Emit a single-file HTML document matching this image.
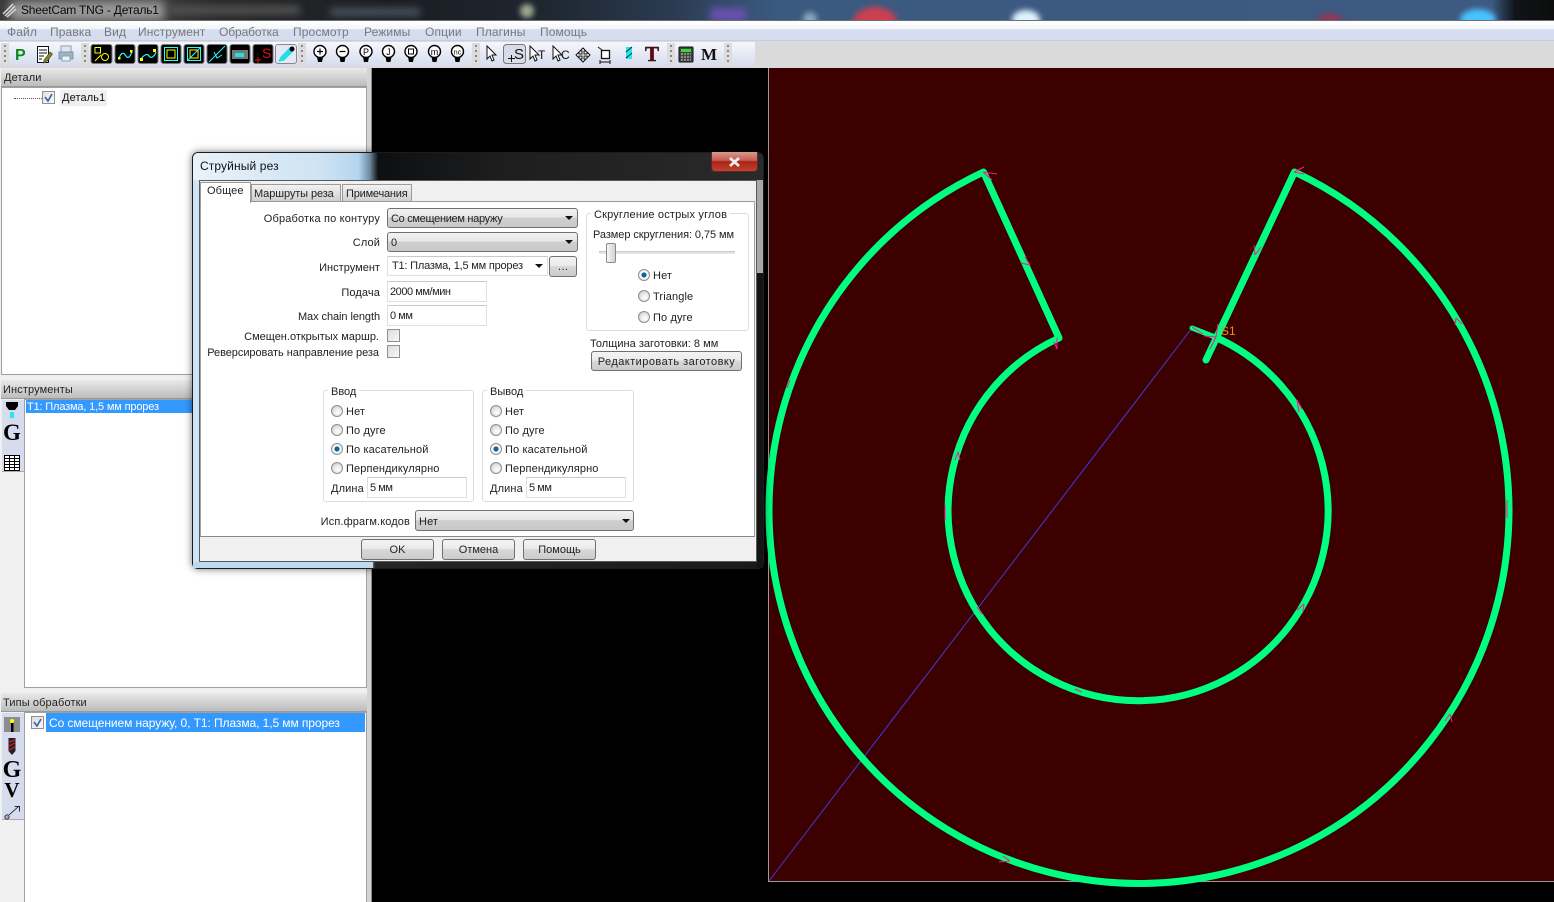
<!DOCTYPE html>
<html lang="ru"><head><meta charset="utf-8"><title>SheetCam TNG - Деталь1</title>
<style>
html,body{margin:0;padding:0;width:1554px;height:902px;overflow:hidden;background:#000}
body{position:relative;font:11px "Liberation Sans","Noto Sans CJK SC",sans-serif;color:#222}
div,span{position:absolute;box-sizing:border-box}
.t{white-space:nowrap;line-height:14px;letter-spacing:.12px}
.m{color:#77797f;font-size:12px;top:25px}
.hd{background:linear-gradient(#e9e9e9,#bcbcbc);border-bottom:1px solid #999}
.cb{background:linear-gradient(#f3f3f3 0,#e6e6e6 45%,#cfcfcf 50%,#c9c9c9 100%);border:1px solid #707070;border-radius:3px}
.btn{background:linear-gradient(#f4f4f4 0,#ebebeb 45%,#d8d8d8 50%,#cbcbcb 100%);border:1px solid #707070;border-radius:3px;text-align:center;line-height:20px;color:#222}
.in{background:#fff;border:1px solid #dbdfe6;border-top-color:#c5c9d0;line-height:20px;padding-left:2px;white-space:nowrap;letter-spacing:-.45px}
.gb{border:1px solid #d5dfe5;border-radius:3px}
.lb{background:#fff;padding:0 3px;white-space:nowrap;line-height:14px}
.ck{width:13px;height:13px;border:1px solid #8e8f8f;background:linear-gradient(135deg,#dcdcdc,#f8f8f8)}
.r{width:12px;height:12px;border-radius:50%;border:1px solid #8e8f8f;background:radial-gradient(circle at 60% 65%,#fff 0,#e6e6e6 50%,#bbb 100%)}
.r.on{background:radial-gradient(circle,#0d6fa8 0,#0a5f94 30%,#fff 42%,#ddd 100%)}
.arr{width:0;height:0;border-left:4px solid transparent;border-right:4px solid transparent;border-top:4px solid #111}
.grip{width:8px;top:43px;height:23px;background:#dcdcdc}
.grip:after{content:"";position:absolute;left:3px;top:2px;width:2px;height:18px;background:repeating-linear-gradient(#888 0 2px,transparent 2px 5px)}
</style></head><body>

<!-- title bar -->
<div style="left:0;top:0;width:1554px;height:20px;overflow:hidden;background:linear-gradient(90deg,#3a3a3a 0,#444 8%,#2a2a2a 14%,#1a1d22 25%,#1e2630 35%,#2a3a50 43%,#3b5a80 50%,#3d5a82 96%,#101418 97.5%,#0c0c0c 100%)">
 <div style="left:10px;top:1px;width:155px;height:20px;background:#9a9a9a;filter:blur(5px)"></div>
 <div style="left:853px;top:7px;width:44px;height:30px;border-radius:50%;background:#cc4050;filter:blur(3px)"></div>
 <div style="left:803px;top:12px;width:14px;height:16px;border-radius:50%;background:#8aa8c0;filter:blur(3px)"></div>
 <div style="left:1012px;top:10px;width:28px;height:20px;border-radius:50%;background:#dff2ff;filter:blur(3px)"></div>
 <div style="left:1316px;top:13px;width:28px;height:20px;border-radius:50%;background:#8a3a5a;filter:blur(3px)"></div>
 <div style="left:1460px;top:9px;width:36px;height:22px;border-radius:50%;background:#49c4ff;filter:blur(3px)"></div>
 <div style="left:520px;top:4px;width:14px;height:14px;border-radius:50%;background:#a0a890;filter:blur(3px)"></div>
 <div style="left:710px;top:8px;width:36px;height:14px;background:#6a50b0;filter:blur(4px)"></div>
 <div style="left:170px;top:6px;width:130px;height:8px;background:#555;filter:blur(4px)"></div>
 <div style="left:330px;top:8px;width:90px;height:8px;background:#4a5560;filter:blur(4px)"></div>
 <svg style="position:absolute;left:2px;top:2px" width="16" height="16"><path d="M1 12L11 2M3 14L13 4M5 15L14 7" stroke="#ddd" stroke-width="1.5" fill="none"/></svg>
 <span class="t" style="left:21px;top:3px;font-size:12px;color:#0a0a0a;letter-spacing:-.2px">SheetCam TNG - Деталь1</span>
</div>
<div style="left:0;top:20px;width:1554px;height:1px;background:#6e6e70"></div>

<!-- menu -->
<div style="left:0;top:21px;width:1554px;height:20px;background:linear-gradient(#fff 0,#f3f5fa 40%,#d6ddef 42%,#d6ddef 95%,#b8bbd6 100%)"></div>
<span class="t m" style="left:7px">Файл</span><span class="t m" style="left:50px">Правка</span><span class="t m" style="left:104px">Вид</span><span class="t m" style="left:138px">Инструмент</span><span class="t m" style="left:219px;letter-spacing:-.1px">Обработка</span><span class="t m" style="left:293px">Просмотр</span><span class="t m" style="left:364px">Режимы</span><span class="t m" style="left:425px">Опции</span><span class="t m" style="left:476px">Плагины</span><span class="t m" style="left:540px">Помощь</span>

<!-- toolbar -->
<div style="left:0;top:41px;width:1554px;height:27px;background:#dadada"></div>
<div style="left:0;top:42px;width:755px;height:24px;background:linear-gradient(#f6f7fc,#d6dcee)"></div>
<div class="grip" style="left:1px"></div><div class="grip" style="left:81px"></div><div class="grip" style="left:298px"></div><div class="grip" style="left:472px"></div><div class="grip" style="left:667px"></div><div class="grip" style="left:724px"></div>

<svg style="position:absolute;left:0;top:0" width="760" height="68" font-family="Liberation Sans">
 <text x="15" y="60" font-size="16" font-weight="bold" fill="#0a8a1e">P</text>
 <path d="M37.500 46.500h11v16h-11z" fill="#fff" stroke="#111"/><path d="M39 50h8M39 53h8M39 56h5M39 59h3" stroke="#111"/><path d="M44 60l6-8 2.500 2-6 8-3 1z" fill="#7a8a20" stroke="#333" stroke-width=".6"/>
 <path d="M61 46h10v6h-10z" fill="#dfe6f0" stroke="#8aa0b4"/><path d="M59 52h14v7h-14z" fill="#9fb3c6" stroke="#7d94a8"/><path d="M62 56h8v5h-8z" fill="#eef2f6" stroke="#8aa0b4"/>
 <g stroke="#777" fill="#000"><rect x="91" y="44.500" width="21" height="19" rx="2.500"/><rect x="115" y="44.500" width="20" height="19" rx="2.500"/><rect x="138" y="44.500" width="20" height="19" rx="2.500"/><rect x="161" y="44.500" width="20" height="19" rx="2.500"/><rect x="184" y="44.500" width="20" height="19" rx="2.500"/><rect x="207" y="44.500" width="20" height="19" rx="2.500"/><rect x="230" y="44.500" width="20" height="19" rx="2.500"/><rect x="253" y="44.500" width="20" height="19" rx="2.500"/></g>
 <rect x="275.500" y="44.500" width="21" height="19" rx="2.500" fill="#e4e8f4" stroke="#888"/>
 <g fill="none" stroke="#ff0" stroke-width="1"><rect x="95" y="47.500" width="5.500" height="5.500"/><circle cx="105" cy="57" r="3.500"/><path d="M95 61l6-6"/></g>
 <path d="M119 58c3-7 5-5 7-2s4 1 6-4" fill="none" stroke="#2ff" stroke-width="1.200"/><rect x="118" y="57" width="2.500" height="2.500" fill="#ff0"/><rect x="130" y="50" width="2.500" height="2.500" fill="#ff0"/>
 <path d="M141 59c3-4 6-6 8-3s5 1 7-4" fill="none" stroke="#2ff" stroke-width="1.200"/><rect x="140" y="58" width="3" height="3" fill="#ff0"/><rect x="153" y="49" width="3" height="3" fill="#ff0"/>
 <rect x="164.500" y="47.500" width="13" height="13" fill="none" stroke="#2ff"/><rect x="167" y="50" width="8" height="8" fill="none" stroke="#ff0"/>
 <rect x="187.500" y="47.500" width="13" height="13" fill="none" stroke="#2ff"/><rect x="190" y="50" width="8" height="8" fill="none" stroke="#ff0"/><path d="M188 60l13-13" stroke="#2ff"/>
 <path d="M209 62l16-16M214 52l3 6 5-3" fill="none" stroke="#2ff"/>
 <rect x="232" y="50" width="16" height="9" fill="#777"/><rect x="235" y="53" width="9" height="4" fill="#1de0e8"/>
 <text x="262" y="58" font-size="14" fill="#e01010">S</text><path d="M255 60h6M258 57v6" stroke="#e01010"/>
 <path d="M279 61l2-4 9-9 3 3-9 9z" fill="#1de0e8" stroke="#1de0e8"/><circle cx="292" cy="49" r="2.500" fill="#000"/>
 <g fill="#fff" stroke="#000" stroke-width="1.400"><circle cx="320" cy="51.500" r="6"/><circle cx="342.500" cy="51.500" r="6"/><circle cx="366" cy="51.500" r="6"/><circle cx="388.500" cy="51.500" r="6"/><circle cx="411" cy="51.500" r="6"/><circle cx="434.500" cy="51.500" r="6"/><circle cx="457.500" cy="51.500" r="6"/></g>
 <g fill="#000"><path d="M317 57h6l-1 5h-4z"/><path d="M339.500 57h6l-1 5h-4z"/><path d="M363 57h6l-1 5h-4z"/><path d="M385.500 57h6l-1 5h-4z"/><path d="M408 57h6l-1 5h-4z"/><path d="M431.500 57h6l-1 5h-4z"/><path d="M454.500 57h6l-1 5h-4z"/></g>
 <path d="M317 51.500h6M320 48.500v6M339.500 51.500h6" stroke="#000" stroke-width="1.200"/>
 <g font-size="9" fill="#000" text-anchor="middle"><text x="366" y="55">P</text><text x="388.500" y="55">J</text><text x="434.500" y="55">m</text><text x="457.500" y="54.500" font-size="7">nc</text></g>
 <rect x="408.500" y="49" width="5" height="5" fill="none" stroke="#000"/>
 <rect x="503.500" y="44.500" width="22" height="19" rx="3" fill="#d8dbe8" stroke="#777"/>
 <text x="514" y="59" font-size="15" fill="#111">S</text><path d="M508 58.500h7M511.500 55v7" stroke="#111"/>
 <g fill="#fff" stroke="#111"><path d="M487 46v13l3-3 2 5 2-1-2-5h4z"/><path d="M530 46v13l3-3 2 5 2-1-2-5h4z"/><path d="M553 46v13l3-3 2 5 2-1-2-5h4z"/></g>
 <text x="538" y="59" font-size="12" fill="#111">T</text><text x="561" y="59" font-size="12" fill="#111">C</text>
 <path d="M583 48l3 3h-2v3h3v-2l3 3-3 3v-2h-3v3h2l-3 3-3-3h2v-3h-3v2l-3-3 3-3v2h3v-3h-2z" fill="#fff" stroke="#111"/>
 <rect x="601.500" y="50.500" width="8" height="8" fill="#fff" stroke="#111" stroke-width="1.300"/><path d="M598 47l4 3M600 62h10M600 60v4M610 60v4" stroke="#111" fill="none"/>
 <rect x="626" y="47" width="6" height="12" fill="#1de8f0"/><path d="M626 58l6-5M626 52l6-5" stroke="#222"/>
 <text x="652" y="61" font-size="21" font-weight="bold" font-family="Liberation Serif" text-anchor="middle" fill="#6a0606" stroke="#111" stroke-width=".4">T</text>
 <rect x="679" y="47" width="14" height="15" rx="1" fill="#444" stroke="#111"/><rect x="681" y="49" width="10" height="3" fill="#2ee02e"/><path d="M681 54h10M681 57h10M681 60h10" stroke="#ccc" stroke-dasharray="2 1"/>
 <text x="709" y="60" font-size="17" font-weight="bold" font-family="Liberation Serif" text-anchor="middle" fill="#111">M</text>
</svg>

<!-- left column -->
<div style="left:0;top:68px;width:372px;height:834px;background:#f0f0f0"></div>
<div style="left:367px;top:68px;width:4px;height:834px;background:#d4d4d4"></div>
<div style="left:371px;top:68px;width:1px;height:834px;background:#8c8c8c"></div>
<div class="hd" style="left:1px;top:68px;width:366px;height:19px"></div>
<span class="t" style="left:4px;top:71px">Детали</span>
<div style="left:1px;top:87px;width:366px;height:288px;background:#fff;border:1px solid #a0a0a0"></div>
<div style="left:14px;top:98px;width:28px;border-top:1px dotted #555"></div>
<div class="ck" style="left:42px;top:91px;background:linear-gradient(135deg,#e2e2e2,#fbfbfb)"></div>
<svg style="position:absolute;left:42px;top:91px" width="13" height="13"><path d="M3 6l3 4 4-7" fill="none" stroke="#3f5fa8" stroke-width="1.600"/></svg>
<span style="left:60px;top:90px;width:47px;height:16px;background:#efefef"></span>
<span class="t" style="left:62px;top:91px;color:#111">Деталь1</span>

<div class="hd" style="left:1px;top:380px;width:366px;height:19px"></div>
<span class="t" style="left:3px;top:383px">Инструменты</span>
<div style="left:1px;top:399px;width:24px;height:289px;background:#f0f0f0"></div>
<div style="left:2px;top:400px;width:22px;height:72px;background:#d5dcee;border-bottom:1px solid #aaa"></div>
<div style="left:24px;top:399px;width:343px;height:289px;background:#fff;border:1px solid #a0a0a0"></div>
<div style="left:26px;top:400px;width:340px;height:13px;background:#3399ff"></div>
<span class="t" style="left:27px;top:400px;color:#fff;letter-spacing:-.16px">T1: Плазма, 1,5 мм прорез</span>
<svg style="position:absolute;left:0;top:398px" width="25" height="76"><path d="M6 4h12v4l-3 4h-6l-3-4z" fill="#000"/><rect x="10" y="14" width="4" height="6" fill="#33e0f0"/><text x="12" y="42" text-anchor="middle" font-family="Liberation Serif" font-weight="bold" font-size="23" fill="#000">G</text><path d="M4.500 57.500h15v15h-15zM4.500 60.500h15M4.500 63.500h15M4.500 66.500h15M4.500 69.500h15M9.500 57.500v15M14.500 57.500v15" fill="#fff" stroke="#000"/></svg>

<div class="hd" style="left:1px;top:693px;width:366px;height:19px"></div>
<span class="t" style="left:3px;top:696px">Типы обработки</span>
<div style="left:2px;top:713px;width:22px;height:107px;background:#d5dcee;border-bottom:1px solid #aaa"></div>
<div style="left:24px;top:712px;width:343px;height:190px;background:#fff;border:1px solid #a0a0a0;border-bottom:0"></div>
<div style="left:46px;top:713px;width:319px;height:19px;background:#3399ff"></div>
<div class="ck" style="left:31px;top:716px"></div>
<svg style="position:absolute;left:31px;top:716px" width="13" height="13"><path d="M3 6l3 4 4-7" fill="none" stroke="#3f5fa8" stroke-width="1.600"/></svg>
<span class="t" style="left:49px;top:716px;font-size:12px;color:#fff;letter-spacing:-.08px">Со смещением наружу, 0, T1: Плазма, 1,5 мм прорез</span>
<svg style="position:absolute;left:0;top:712px" width="25" height="112"><rect x="4" y="5" width="16" height="15" fill="#8d8d8d"/><circle cx="12" cy="9" r="2" fill="#ff0"/><rect x="11" y="11" width="2.500" height="9" fill="#000"/><path d="M8.500 26h7v13l-3.500 4-3.500-4z" fill="#222"/><path d="M9 30l6-2M9 34l6-3M9 38l6-3" stroke="#e01030" stroke-width="1.200"/><text x="12" y="65" text-anchor="middle" font-family="Liberation Serif" font-weight="bold" font-size="24" fill="#000">G</text><text x="12" y="85" text-anchor="middle" font-family="Liberation Serif" font-weight="bold" font-size="21" fill="#000">V</text><circle cx="7" cy="105" r="2.200" fill="#aaa" stroke="#000" stroke-width=".7"/><path d="M9 103l10-9M14.500 94.500h5v5" fill="none" stroke="#000" stroke-width=".8"/></svg>

<!-- canvas -->
<div style="left:768px;top:68px;width:786px;height:814px;background:#3c0000;border-left:1px solid #9a9a9a;border-bottom:1px solid #9a9a9a"></div>
<svg style="position:absolute;left:0;top:0" width="1554" height="902" fill="none">
 <path d="M769 881L1192 328" stroke="#3c3cd8" stroke-width="1"/>
 <g stroke="#00ff80" stroke-width="7" stroke-linecap="round" stroke-linejoin="round">
  <path d="M1215 337A190 190 0 1 1 1059 338L983.500 172A370 373 0 1 0 1294.500 172L1206 360"/>
  <path d="M1192 328L1215 337" stroke-width="5"/>
 </g>
 <g stroke="#ff1493" stroke-width="1">
  <path d="M983 172l14 2M983 172l9 8M1294 172l10-5M1294 172l10 2"/>
  <path d="M1255 255l-1-10M1255 255l6-8M1216 337l-6 12M1216 337l2-13M1216 337l-12-1M1192 327l11 7M1030 265l-5-8M1030 265l-9-2M1057 349v-11M1057 349l-3-7"/>
  <path d="M1297 400l2 12M1297 400l5 9M1456 318l6 6M1456 318l-1 7M1304 604l-7 6M1304 604l-1 8M1450 714l-5 7M1450 714l2 8M1010 861l-11 1M1010 861l-7-5M1075 689l7 3M958 452l-3 8M958 452l2 8M790 380l-3 8M1507 500v18"/>
  <path d="M945 505v15M977 607l5 7"/>
 </g>
 <text x="1221" y="335" font-size="12" fill="#e89018" font-family="Liberation Sans">S1</text>
</svg>

<!-- dialog -->
<div style="left:192px;top:152px;width:572px;height:417px;border-radius:6px;border:1px solid #1c1c1c;background:linear-gradient(90deg,#cfe5f6 0,#bcd9f0 30%,#9fc6e6 31%,#262626 32%,#1a1a1a 100%);box-shadow:0 0 8px rgba(0,0,0,.55)"></div>
<div style="left:193px;top:153px;width:570px;height:27px;border-radius:5px 5px 0 0;background:linear-gradient(90deg,#e8f2fa 0,#cfe3f3 22%,#b4d6f0 29%,#6f8ba3 31%,#0d0f12 32.500%,#1e1e1e 55%,#2a2a2a 100%)"></div>
<div style="left:757px;top:180px;width:6px;height:93px;background:#a8a8a8"></div>
<div style="left:757px;top:273px;width:6px;height:295px;background:#141414"></div>
<div style="left:193px;top:562px;width:180px;height:6px;background:#bcd9f0"></div>
<span class="t" style="left:200px;top:159px;font-size:12px;color:#111">Струйный рез</span>
<div style="left:711px;top:152px;width:47px;height:20px;background:linear-gradient(#d89a90 0,#c85a50 45%,#a82418 50%,#c2402f 100%);border:1px solid #5a2a28;border-top:0;border-radius:0 0 4px 4px"></div>
<svg style="position:absolute;left:727px;top:156px" width="16" height="12"><path d="M3 2l9 8M12 2l-9 8" stroke="#eee" stroke-width="2.800"/></svg>

<div style="left:199px;top:180px;width:558px;height:382px;background:#f0f0f0;border:1px solid #5a5a5a"></div>
<div style="left:200px;top:201px;width:555px;height:336px;background:#fff;border:1px solid #a0a0a0;border-bottom:1px solid #888;border-top:1px solid #9a9a9a"></div>
<div style="left:200px;top:182px;width:51px;height:21px;background:#fff;border:1px solid #9a9a9a;border-bottom:0"></div>
<div style="left:251px;top:184px;width:90px;height:18px;background:linear-gradient(#f2f2f2,#cfcfcf);border:1px solid #9a9a9a"></div>
<div style="left:342px;top:184px;width:70px;height:18px;background:linear-gradient(#f2f2f2,#cfcfcf);border:1px solid #9a9a9a"></div>
<span class="t" style="left:207px;top:184px">Общее</span><span class="t" style="left:254px;top:187px;letter-spacing:-.1px">Маршруты реза</span><span class="t" style="left:346px;top:187px;letter-spacing:-.2px">Примечания</span>

<span class="t" style="right:1174px;top:212px;letter-spacing:.17px">Обработка по контуру</span>
<span class="t" style="right:1174px;top:236px">Слой</span>
<span class="t" style="right:1174px;top:261px;letter-spacing:.02px">Инструмент</span>
<span class="t" style="right:1174px;top:286px">Подача</span>
<span class="t" style="right:1174px;top:310px;letter-spacing:-.07px">Max chain length</span>
<span class="t" style="right:1175px;top:330px;letter-spacing:0">Смещен.открытых маршр.</span>
<span class="t" style="right:1175px;top:346px;letter-spacing:-.05px">Реверсировать направление реза</span>

<div class="cb" style="left:387px;top:208px;width:191px;height:20px"></div><span class="t" style="left:391px;top:212px;letter-spacing:-.3px">Со смещением наружу</span><div class="arr" style="left:565px;top:216px"></div>
<div class="cb" style="left:387px;top:232px;width:191px;height:20px"></div><span class="t" style="left:391px;top:236px">0</span><div class="arr" style="left:565px;top:240px"></div>
<div class="in" style="left:387px;top:256px;width:161px;height:20px"></div><span class="t" style="left:392px;top:259px;letter-spacing:-.2px">T1: Плазма, 1,5 мм прорез</span><div class="arr" style="left:535px;top:264px"></div>
<div class="btn" style="left:549px;top:256px;width:28px;height:21px">…</div>
<div class="in" style="left:387px;top:281px;width:100px;height:21px">2000 мм/мин</div>
<div class="in" style="left:387px;top:305px;width:100px;height:21px">0 мм</div>
<div class="ck" style="left:387px;top:329px"></div><div class="ck" style="left:387px;top:345px"></div>

<div class="gb" style="left:586px;top:213px;width:163px;height:118px"></div>
<span class="lb" style="left:591px;top:208px;letter-spacing:.18px">Скругление острых углов</span>
<span class="t" style="left:593px;top:228px;letter-spacing:-.07px">Размер скругления: 0,75 мм</span>
<div style="left:599px;top:251px;width:136px;height:3px;background:#e4e4e4;border-top:1px solid #c8c8c8"></div>
<div style="left:606px;top:243px;width:10px;height:20px;background:linear-gradient(90deg,#f6f6f6,#d4d4d4);border:1px solid #8a8a8a;border-radius:2px"></div>
<div class="r on" style="left:638px;top:269px"></div><span class="t" style="left:653px;top:269px">Нет</span>
<div class="r" style="left:638px;top:290px"></div><span class="t" style="left:653px;top:290px">Triangle</span>
<div class="r" style="left:638px;top:311px"></div><span class="t" style="left:653px;top:311px">По дуге</span>
<span class="t" style="left:590px;top:337px;letter-spacing:.03px">Толщина заготовки: 8 мм</span>
<div class="btn" style="left:591px;top:351px;width:151px;height:20px;letter-spacing:.45px">Редактировать заготовку</div>

<div class="gb" style="left:323px;top:390px;width:151px;height:112px"></div>
<span class="lb" style="left:328px;top:385px">Ввод</span>
<div class="r" style="left:331px;top:405px"></div><span class="t" style="left:346px;top:405px">Нет</span>
<div class="r" style="left:331px;top:424px"></div><span class="t" style="left:346px;top:424px">По дуге</span>
<div class="r on" style="left:331px;top:443px"></div><span class="t" style="left:346px;top:443px">По касательной</span>
<div class="r" style="left:331px;top:462px"></div><span class="t" style="left:346px;top:462px">Перпендикулярно</span>
<span class="t" style="left:331px;top:482px">Длина</span><div class="in" style="left:367px;top:477px;width:100px;height:21px">5 мм</div>

<div class="gb" style="left:482px;top:390px;width:152px;height:112px"></div>
<span class="lb" style="left:487px;top:385px">Вывод</span>
<div class="r" style="left:490px;top:405px"></div><span class="t" style="left:505px;top:405px">Нет</span>
<div class="r" style="left:490px;top:424px"></div><span class="t" style="left:505px;top:424px">По дуге</span>
<div class="r on" style="left:490px;top:443px"></div><span class="t" style="left:505px;top:443px">По касательной</span>
<div class="r" style="left:490px;top:462px"></div><span class="t" style="left:505px;top:462px">Перпендикулярно</span>
<span class="t" style="left:490px;top:482px">Длина</span><div class="in" style="left:526px;top:477px;width:100px;height:21px">5 мм</div>

<span class="t" style="right:1144px;top:515px">Исп.фрагм.кодов</span>
<div class="cb" style="left:415px;top:510px;width:219px;height:21px"></div><span class="t" style="left:419px;top:515px">Нет</span><div class="arr" style="left:622px;top:519px"></div>

<div class="btn" style="left:361px;top:539px;width:73px;height:21px">OK</div>
<div class="btn" style="left:442px;top:539px;width:73px;height:21px">Отмена</div>
<div class="btn" style="left:523px;top:539px;width:73px;height:21px">Помощь</div>
</body></html>
